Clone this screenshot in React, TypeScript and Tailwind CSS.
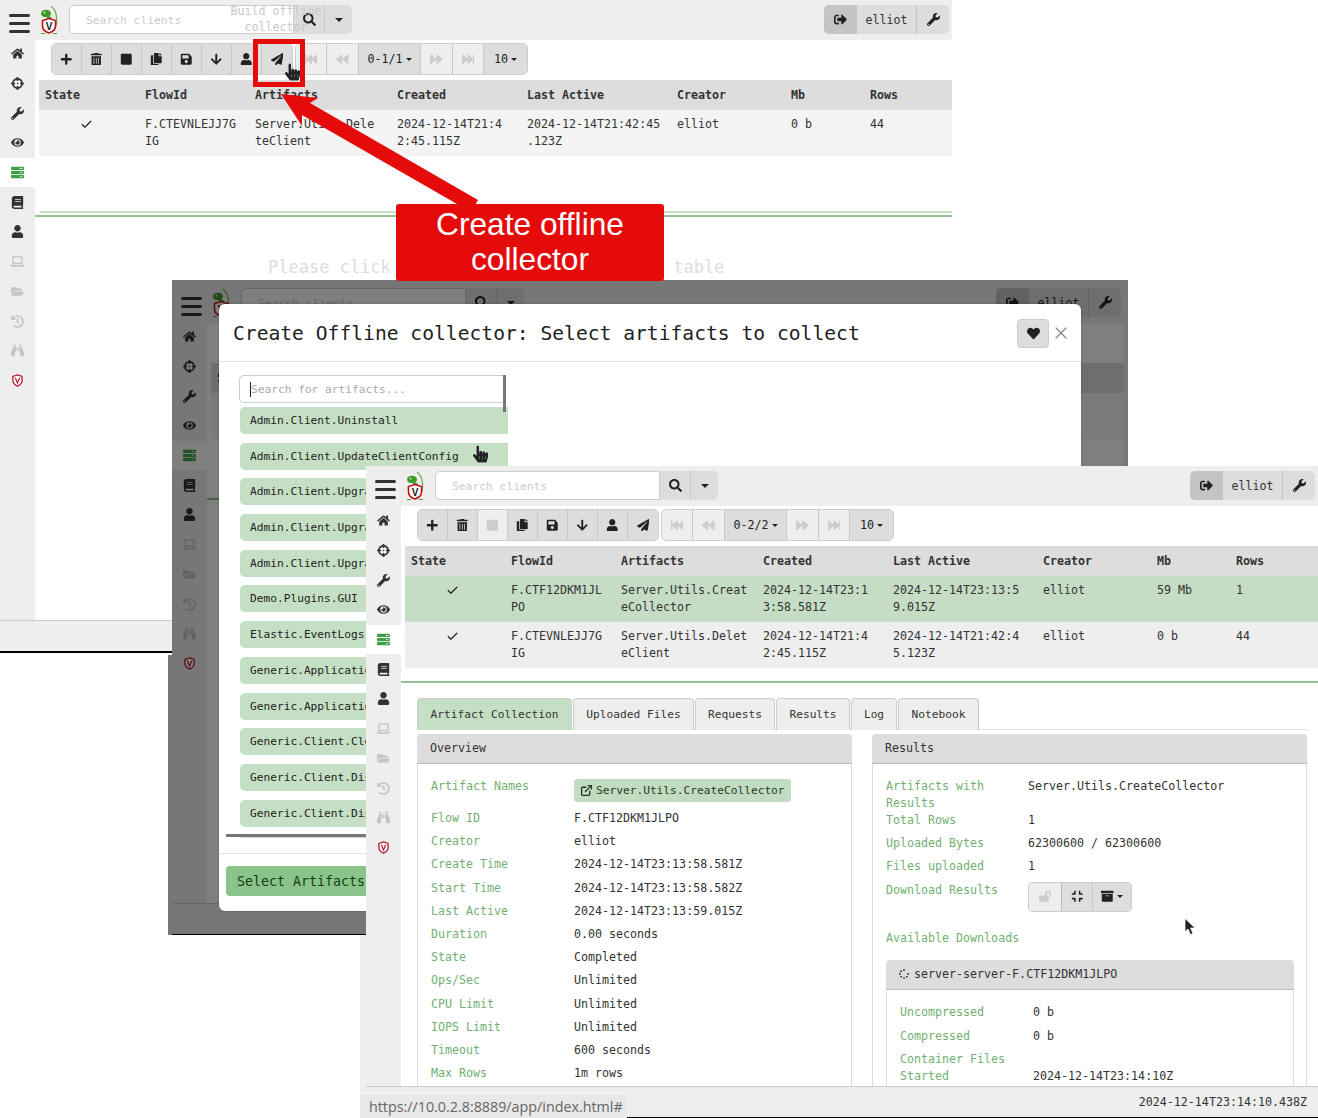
import type { ReactNode } from "react";
import {
  FaArchive, FaArrowDown, FaBackward, FaBinoculars, FaBook, FaCompress, FaCopy, FaCrosshairs, FaEye,
  FaFastBackward, FaFastForward, FaFolderOpen, FaForward, FaHandPointer, FaHeart, FaHistory, FaHome, FaLaptop,
  FaLockOpen, FaPaperPlane, FaPlus, FaSave, FaSearch, FaServer, FaSignOutAlt, FaSpinner, FaStop, FaTrashAlt,
  FaUser, FaWrench,
} from "react-icons/fa";
import { Check, ExternalLink, X } from "lucide-react";

const Logo = () => (
  <svg viewBox="0 0 18 28" className="w-[18px] h-[28px] shrink-0">
    <path d="M11 0C16 4 17.5 12 16 20" fill="none" stroke="#6bb04a" strokeWidth="1.2" />
    <ellipse cx="6" cy="7.5" rx="5" ry="3.8" fill="#3f9a2a" />
    <path d="M7 10C10 10 12 11 12 14L7 14Z" fill="#3f9a2a" />
    <circle cx="4.5" cy="6.5" r="1" fill="#c8eeb8" />
    <path d="M9 12.5L15.5 14.5V20C15.5 24 12 26 9 27C6 26 2.5 24 2.5 20V14.5Z" fill="#fff" stroke="#c1121f" strokeWidth="1.6" />
    <text x="9" y="23.5" textAnchor="middle" fontSize="10" fontWeight="700" fontFamily="Liberation Sans" fill="#222">V</text>
    <path d="M1 27.5H5M13 27.5H17" stroke="#4aa02c" strokeWidth="1" />
  </svg>
);

const ShieldIcon = () => (
  <svg viewBox="0 0 12 14" className="w-[11px] h-[13px]">
    <path d="M6 .8L11 2.5V7C11 10.3 8.3 12.2 6 13.2C3.7 12.2 1 10.3 1 7V2.5Z" fill="#fff" stroke="#b3172b" strokeWidth="1.4" />
    <path d="M3.6 4L6 9.6L8.4 4" fill="none" stroke="#b3172b" strokeWidth="1.3" />
  </svg>
);

const Hamburger = () => (
  <div className="flex flex-col gap-[5px] w-[21px] shrink-0">
    <div className="h-[3px] rounded-full bg-[#333]" />
    <div className="h-[3px] rounded-full bg-[#333]" />
    <div className="h-[3px] rounded-full bg-[#333]" />
  </div>
);

const TopBar = ({ children }: { children?: ReactNode }) => (
  <div className="relative h-10 bg-[#eee] flex items-start shrink-0">
    <div className="pl-[9px] pt-[14px] pr-[10px]"><Hamburger /></div>
    <div className="pt-[6px]"><Logo /></div>
    <div className="flex ml-[11px] mt-[5px] h-[29px]">
      <div className="w-[225px] bg-white border border-[#ccc] rounded-l-[5px] pl-4 pt-[2px] flex items-center text-[11.3px] text-[#ccc]">Search clients</div>
      <div className="w-[31px] bg-[#ddd] flex items-center justify-center text-[#222] text-[13px] border-r border-[#c8c8c8]"><FaSearch /></div>
      <div className="w-[27px] bg-[#ddd] rounded-r-[5px] flex items-center justify-center">
        <span className="border-x-[4px] border-x-transparent border-t-[4px] border-t-[#222]" />
      </div>
    </div>
    <div className="flex ml-auto mr-[3px] mt-[5px] h-[29px]">
      <div className="w-[33px] bg-[#c4c4c4] rounded-l-[5px] flex items-center justify-center text-[#222] text-[13px]"><FaSignOutAlt /></div>
      <div className="w-[60px] bg-[#ddd] pt-[2px] flex items-center justify-center border-r border-[#c4c4c4]">elliot</div>
      <div className="w-[32px] bg-[#ddd] rounded-r-[5px] flex items-center justify-center text-[#222] text-[13px]"><FaWrench /></div>
    </div>
    {children}
  </div>
);

const sideItems = [
  { icon: <FaHome />, cls: "text-[#333]" },
  { icon: <FaCrosshairs />, cls: "text-[#333]" },
  { icon: <FaWrench />, cls: "text-[#333]" },
  { icon: <FaEye />, cls: "text-[#333]" },
  { icon: <FaServer />, cls: "text-[#3f9f47] bg-white" },
  { icon: <FaBook />, cls: "text-[#333]" },
  { icon: <FaUser />, cls: "text-[#333]" },
  { icon: <FaLaptop />, cls: "text-[#c4c4c4]" },
  { icon: <FaFolderOpen />, cls: "text-[#c4c4c4]" },
  { icon: <FaHistory />, cls: "text-[#c4c4c4]" },
  { icon: <FaBinoculars />, cls: "text-[#c4c4c4]" },
  { icon: <ShieldIcon />, cls: "" },
];

const Sidebar = ({ up }: { up?: boolean }) => (
  <div className="w-[35px] shrink-0 bg-[#eee] flex flex-col">
    <div className={up ? "-mt-px" : ""}>
      {sideItems.map((s, i) => (
        <div key={i} className={`h-[29.7px] flex items-center justify-center text-[13px] ${s.cls}`}>{s.icon}</div>
      ))}
    </div>
  </div>
);

const ToolBtn = ({ children, off, w }: { children: ReactNode; off?: boolean; w?: string }) => (
  <div className={`${w ?? "w-[30px]"} h-full flex items-center justify-center text-[12.5px] border-r border-[#c8c8c8] last:border-r-0 ${off ? "bg-[#eee] text-[#ccc]" : "bg-[#ddd] text-[#222]"}`}>
    {children}
  </div>
);

const Caret = () => <span className="ml-[3px] border-x-[3px] border-x-transparent border-t-[3px] border-t-[#222]" />;

const Toolbar = ({ stopOff, range }: { stopOff?: boolean; range: string }) => (
  <div className="flex gap-[4px] h-[30px] ml-[17px]">
    <div className="flex rounded-[5px] overflow-hidden border border-[#ccc] box-content -my-px -mx-px">
      <ToolBtn><FaPlus /></ToolBtn>
      <ToolBtn><FaTrashAlt /></ToolBtn>
      <ToolBtn off={stopOff}><FaStop /></ToolBtn>
      <ToolBtn><FaCopy /></ToolBtn>
      <ToolBtn><FaSave /></ToolBtn>
      <ToolBtn><FaArrowDown /></ToolBtn>
      <ToolBtn><FaUser /></ToolBtn>
      <ToolBtn><FaPaperPlane /></ToolBtn>
    </div>
    <div className="flex rounded-[5px] overflow-hidden border border-[#ccc] box-content -my-px -mx-px">
      <ToolBtn off w="w-[31px]"><FaFastBackward /></ToolBtn>
      <ToolBtn off w="w-[32px]"><FaBackward /></ToolBtn>
      <ToolBtn w="w-[62px]"><span className="text-[11.7px]">{range}</span><Caret /></ToolBtn>
      <ToolBtn off w="w-[32px]"><FaForward /></ToolBtn>
      <ToolBtn off w="w-[31px]"><FaFastForward /></ToolBtn>
      <ToolBtn w="w-[43px]"><span className="text-[11.7px]">10</span><Caret /></ToolBtn>
    </div>
  </div>
);

type Flow = { flow: string; artifact: string; created: string; active: string; mb: string; rows: string; selected?: boolean; pale?: boolean };

const FlowTable = ({ flows }: { flows: Flow[] }) => (
  <div className="mt-[6px] ml-1">
    <div className="grid grid-cols-[100px_110px_142px_130px_150px_114px_79px_1fr] h-[30px] pt-px items-center bg-[#ddd] pl-[6px] font-bold">
      <div>State</div><div>FlowId</div><div>Artifacts</div><div>Created</div><div>Last Active</div><div>Creator</div><div>Mb</div><div>Rows</div>
    </div>
    {flows.map((f) => (
      <div key={f.flow} className={`grid grid-cols-[100px_110px_142px_130px_150px_114px_79px_1fr] h-[46px] pt-[6px] pl-[6px] whitespace-pre ${f.selected ? "bg-[#c5dcc5]" : f.pale ? "bg-[#f4f4f4]" : "bg-[#eee]"}`}>
        <div className="pl-[35px] pt-[2px] text-[#222]"><Check className="w-[13px] h-[13px]" strokeWidth={2.2} /></div>
        <div>{f.flow}</div><div>{f.artifact}</div><div>{f.created}</div><div>{f.active}</div><div>elliot</div><div>{f.mb}</div><div>{f.rows}</div>
      </div>
    ))}
  </div>
);

const AppWindow = ({ flows, range, stopOff, light, up, time, bar, children }: {
  flows: Flow[]; range: string; stopOff?: boolean; light?: boolean; up?: boolean; time?: string; bar?: ReactNode; children?: ReactNode;
}) => (
  <div className="w-[952px] h-[652px] flex flex-col bg-white">
    <TopBar>{bar}</TopBar>
    <div className="flex flex-1 min-h-0">
      <Sidebar up={up} />
      <div className="flex-1 min-w-0 flex flex-col overflow-hidden">
        <div className="h-[175px] shrink-0 pt-[4px] flex flex-col">
          <Toolbar stopOff={stopOff} range={range} />
          <FlowTable flows={flows} />
          {light && <div className="mt-auto mb-[2px] ml-[5px] h-[2px] bg-[#c8dec8]" />}
        </div>
        <div className="h-[2px] shrink-0 bg-[#93c193]" />
        {children}
      </div>
    </div>
    <div className="h-[33px] -mb-px shrink-0 bg-[#eee] border-t border-[#ccc] border-b-2 border-b-black flex items-center justify-end pr-[11px] pl-0 relative">
      {time}
    </div>
  </div>
);

const oldFlow: Flow = { flow: "F.CTEVNLEJJ7G\nIG", artifact: "Server.Utils.Dele\nteClient", created: "2024-12-14T21:4\n2:45.115Z", active: "2024-12-14T21:42:45\n.123Z", mb: "0 b", rows: "44", pale: true };
const newFlows: Flow[] = [
  { flow: "F.CTF12DKM1JL\nPO", artifact: "Server.Utils.Creat\neCollector", created: "2024-12-14T23:1\n3:58.581Z", active: "2024-12-14T23:13:5\n9.015Z", mb: "59 Mb", rows: "1", selected: true },
  { flow: "F.CTEVNLEJJ7G\nIG", artifact: "Server.Utils.Delet\neClient", created: "2024-12-14T21:4\n2:45.115Z", active: "2024-12-14T21:42:4\n5.123Z", mb: "0 b", rows: "44" },
];

const artifacts = [
  "Admin.Client.Uninstall", "Admin.Client.UpdateClientConfig", "Admin.Client.Upgrade", "Admin.Client.Upgrade.Debian",
  "Admin.Client.Upgrade.RedHat", "Demo.Plugins.GUI", "Elastic.EventLogs", "Generic.Applications", "Generic.Applications.Office",
  "Generic.Client.Cleanup", "Generic.Client.DiskSpace", "Generic.Client.DiskUsage", "Generic.Client.Info",
];

const Modal = () => (
  <div className="absolute left-[47px] top-6 w-[862px] h-[607px] bg-white rounded-[6px] flex flex-col shadow-[0_0_2px_rgba(0,0,0,0.3)]">
    <div className="h-[58px] shrink-0 pt-px border-b border-[#e2e2e2] flex items-center pl-[14px] pr-[10px]">
      <div className="text-[19.65px] text-[#222]">Create Offline collector: Select artifacts to collect</div>
      <div className="ml-auto w-[32px] h-[29px] bg-[#ddd] border border-[#ccc] rounded-[4px] flex items-center justify-center text-[13px] text-[#222]"><FaHeart /></div>
      <X className="ml-[2px] w-[20px] h-[20px] text-[#888]" strokeWidth={1.5} />
    </div>
    <div className="flex-1 min-h-0 relative pl-[20px] pt-[13px]">
      <div className="w-[266px] h-[28px] border border-[#ccc] rounded-l-[5px] border-r-0 flex items-center pl-[10px] text-[11.2px] text-[#aaa]">
        <span className="w-px h-[15px] bg-[#222]" />Search for artifacts...
      </div>
      <div className="w-[268px] h-[431px] ml-px mt-[4px] overflow-hidden flex flex-col gap-[8.7px]">
        {artifacts.map((a) => (
          <div key={a} className="w-[320px] h-[27px] shrink-0 rounded-[5px] bg-[#c5dfc5] pl-[10px] flex items-center text-[11.2px] text-[#222] whitespace-nowrap">{a}</div>
        ))}
      </div>
      <div className="absolute left-[284px] top-[13px] w-[3px] h-[37px] bg-[#777]" />
      <div className="absolute left-[7px] top-[472px] w-[300px] h-[3px] bg-[#777]" />
    </div>
    <div className="h-[58px] shrink-0 border-t border-[#e2e2e2] pl-[7px] pt-[12px]">
      <div className="w-[200px] h-[30px] bg-[#8ac48a] rounded-[4px] pl-[11px] flex items-center text-[13.3px] text-[#153d15]">Select Artifacts</div>
    </div>
  </div>
);

const Row = ({ label, children, cols, h }: { label: ReactNode; children?: ReactNode; cols: string; h: string }) => (
  <div className={`grid ${cols} ${h}`}>
    <div className="text-[#72b072]">{label}</div>
    <div className="min-w-0">{children}</div>
  </div>
);

const Card = ({ title, children, cls }: { title: ReactNode; children: ReactNode; cls?: string }) => (
  <div className={`${cls ?? "w-[435px]"} shrink-0 flex flex-col`}>
    <div className="h-[30px] bg-[#ddd] border-b border-[#bbb] rounded-t-[4px] flex items-center pl-[13px]">{title}</div>
    <div className="border-x border-[#ddd] flex-1">{children}</div>
  </div>
);

const c1 = "grid-cols-[143px_1fr]";
const overview: [string, string][] = [
  ["Flow ID", "F.CTF12DKM1JLPO"], ["Creator", "elliot"], ["Create Time", "2024-12-14T23:13:58.581Z"],
  ["Start Time", "2024-12-14T23:13:58.582Z"], ["Last Active", "2024-12-14T23:13:59.015Z"], ["Duration", "0.00 seconds"],
  ["State", "Completed"], ["Ops/Sec", "Unlimited"], ["CPU Limit", "Unlimited"], ["IOPS Limit", "Unlimited"],
  ["Timeout", "600 seconds"], ["Max Rows", "1m rows"],
];

const tabs = [
  { name: "Artifact Collection", w: "w-[155px]", on: true },
  { name: "Uploaded Files", w: "w-[121px]" },
  { name: "Requests", w: "w-[80px]" },
  { name: "Results", w: "w-[74px]" },
  { name: "Log", w: "w-[46px]" },
  { name: "Notebook", w: "w-[81px]" },
];

const Details = () => (
  <div className="flex-1 min-h-0 overflow-hidden pl-4 pt-[15px] pr-[11px]">
    <div className="flex gap-[1px] h-[32px] border-b border-[#ddd]">
      {tabs.map((t) => (
        <div key={t.name} className={`${t.w} h-[32px] flex items-center justify-center rounded-t-[4px] border border-b-0 border-[#ccc] text-[11.2px] ${t.on ? "bg-[#c5dfc5]" : "bg-[#eee]"}`}>{t.name}</div>
      ))}
    </div>
    <div className="flex gap-5 mt-1">
      <Card title="Overview">
        <div className="pl-[13px] pt-[14px]">
          <Row label="Artifact Names" cols={c1} h="h-[32px]">
            <div className="inline-flex items-center h-[23px] mt-[1px] px-[6px] gap-[3px] bg-[#c1dcc1] rounded-[3px] text-[11.2px] text-[#1e3d1e]">
              <ExternalLink className="w-[13px] h-[13px]" strokeWidth={2.4} />Server.Utils.CreateCollector
            </div>
          </Row>
          {overview.map(([l, v]) => <Row key={l} label={l} cols={c1} h="h-[23.2px]">{v}</Row>)}
        </div>
      </Card>
      <Card title="Results">
        <div className="pl-[13px] pt-[14px] pr-[13px]">
          <Row label={<>Artifacts with<br />Results</>} cols="grid-cols-[142px_1fr]" h="h-[34px]">Server.Utils.CreateCollector</Row>
          <Row label="Total Rows" cols="grid-cols-[142px_1fr]" h="h-[23.2px]">1</Row>
          <Row label="Uploaded Bytes" cols="grid-cols-[142px_1fr]" h="h-[23.2px]">62300600 / 62300600</Row>
          <Row label="Files uploaded" cols="grid-cols-[142px_1fr]" h="h-[23.2px]">1</Row>
          <Row label="Download Results" cols="grid-cols-[142px_1fr]" h="h-[48.5px]">
            <div className="flex h-[30px] w-[104px] rounded-[4px] overflow-hidden border border-[#ccc] text-[12.5px] text-[#222]">
              <div className="w-[33px] bg-[#eee] text-[#ccc] flex items-center justify-center border-r border-[#bbb]"><FaLockOpen /></div>
              <div className="w-[31px] bg-[#ddd] flex items-center justify-center border-r border-[#c8c8c8]"><FaCompress /></div>
              <div className="flex-1 bg-[#ddd] flex items-center justify-center"><FaArchive /><Caret /></div>
            </div>
          </Row>
          <div className="h-[29.5px] text-[#72b072]">Available Downloads</div>
          <Card cls="w-[408px]" title={<span className="flex items-center gap-[5px]"><FaSpinner className="text-[10px]" />server-server-F.CTF12DKM1JLPO</span>}>
            <div className="pl-[13px] pt-[14.5px] pb-[20px]">
              <Row label="Uncompressed" cols="grid-cols-[133px_1fr]" h="h-[24px]">0 b</Row>
              <Row label="Compressed" cols="grid-cols-[133px_1fr]" h="h-[23px]">0 b</Row>
              <Row label="Container Files" cols="grid-cols-[133px_1fr]" h="h-[17px]" />
              <Row label="Started" cols="grid-cols-[133px_1fr]" h="h-[17px]">2024-12-14T23:14:10Z</Row>
            </div>
          </Card>
        </div>
      </Card>
    </div>
  </div>
);

const Hand = ({ cls }: { cls: string }) => (
  <FaHandPointer className={`absolute text-[#222] ${cls}`} stroke="#fff" strokeWidth={28} style={{ paintOrder: "stroke" }} />
);

export default function App() {
  return (
    <div className="relative w-[1318px] h-[1118px] overflow-hidden bg-white font-[DejaVu_Sans_Mono,monospace] text-[11.65px] leading-[17px] text-[#333]">
      {/* first capture */}
      <div className="absolute left-0 top-0">
        <AppWindow
          flows={[oldFlow]}
          range="0-1/1"
          light
          up
          bar={
            <div className="absolute left-[226px] top-[3px] w-[100px] text-center leading-4 text-[#c8c8c8]">Build offline collector</div>
          }
        >
          <div className="pt-[42px] pl-[233px] text-[17px] text-[#ddd] whitespace-nowrap">Please click a collection in the above <span className="ml-[6px]">table</span></div>
        </AppWindow>
      </div>

      {/* second capture, dimmed behind the dialog */}
      <div className="absolute left-[168px] top-[655px] w-1 h-[280px] bg-[#777]" />
      <div className="absolute left-[172px] top-[280px] w-[956px] h-[655px] bg-[#eee] pt-[3px] overflow-hidden">
        <AppWindow flows={[oldFlow]} range="0-1/1" up />
        <div className="absolute inset-0 bg-black/50" />
        <Modal />
      </div>
      <Hand cls="left-[473px] top-[445px] w-[15px] h-[18px]" />

      {/* third capture */}
      <div className="absolute left-[360px] top-[935px] w-[6px] h-[183px] bg-[#eee]" />
      <div className="absolute left-[366px] top-[466px]">
        <AppWindow flows={newFlows} range="0-2/2" stopOff time="2024-12-14T23:14:10.438Z">
          <Details />
        </AppWindow>
      </div>
      <div className="absolute left-[360px] top-[1095px] w-[267px] h-[23px] bg-[#e8e8e8] rounded-tr-[4px] pl-[9px] font-['Open_Sans',sans-serif] text-[14.3px] leading-[23px] text-[#666] whitespace-nowrap">https://10.0.2.8:8889/app/index.html#</div>
      <svg viewBox="0 0 12 18" className="absolute left-[1184px] top-[917px] w-[12px] h-[19px]">
        <path d="M1 1V14L4 11.5L6.5 17L9 16L6.5 10.5H11Z" fill="#222" stroke="#fff" strokeWidth=".7" />
      </svg>

      {/* annotation */}
      <svg viewBox="0 0 220 130" className="absolute left-[270px] top-[85px] w-[220px] h-[130px]">
        <polygon points="11,9 48,13 40,18 208,115 201,127 32,30 32,41" fill="#e60b0b" />
      </svg>
      <div className="absolute left-[253px] top-[39px] w-[52px] h-[48px] border-[5px] border-[#e60b0b]" />
      <Hand cls="left-[285px] top-[63px] w-[15px] h-[18px]" />
      <div className="absolute left-[396px] top-[204px] w-[268px] h-[77px] bg-[#e60b0b] rounded-[3px] pb-[2px] flex items-center justify-center text-center font-['Liberation_Sans',sans-serif] text-[31.7px] leading-[35px] text-white">
        Create offline<br />collector
      </div>
    </div>
  );
}
